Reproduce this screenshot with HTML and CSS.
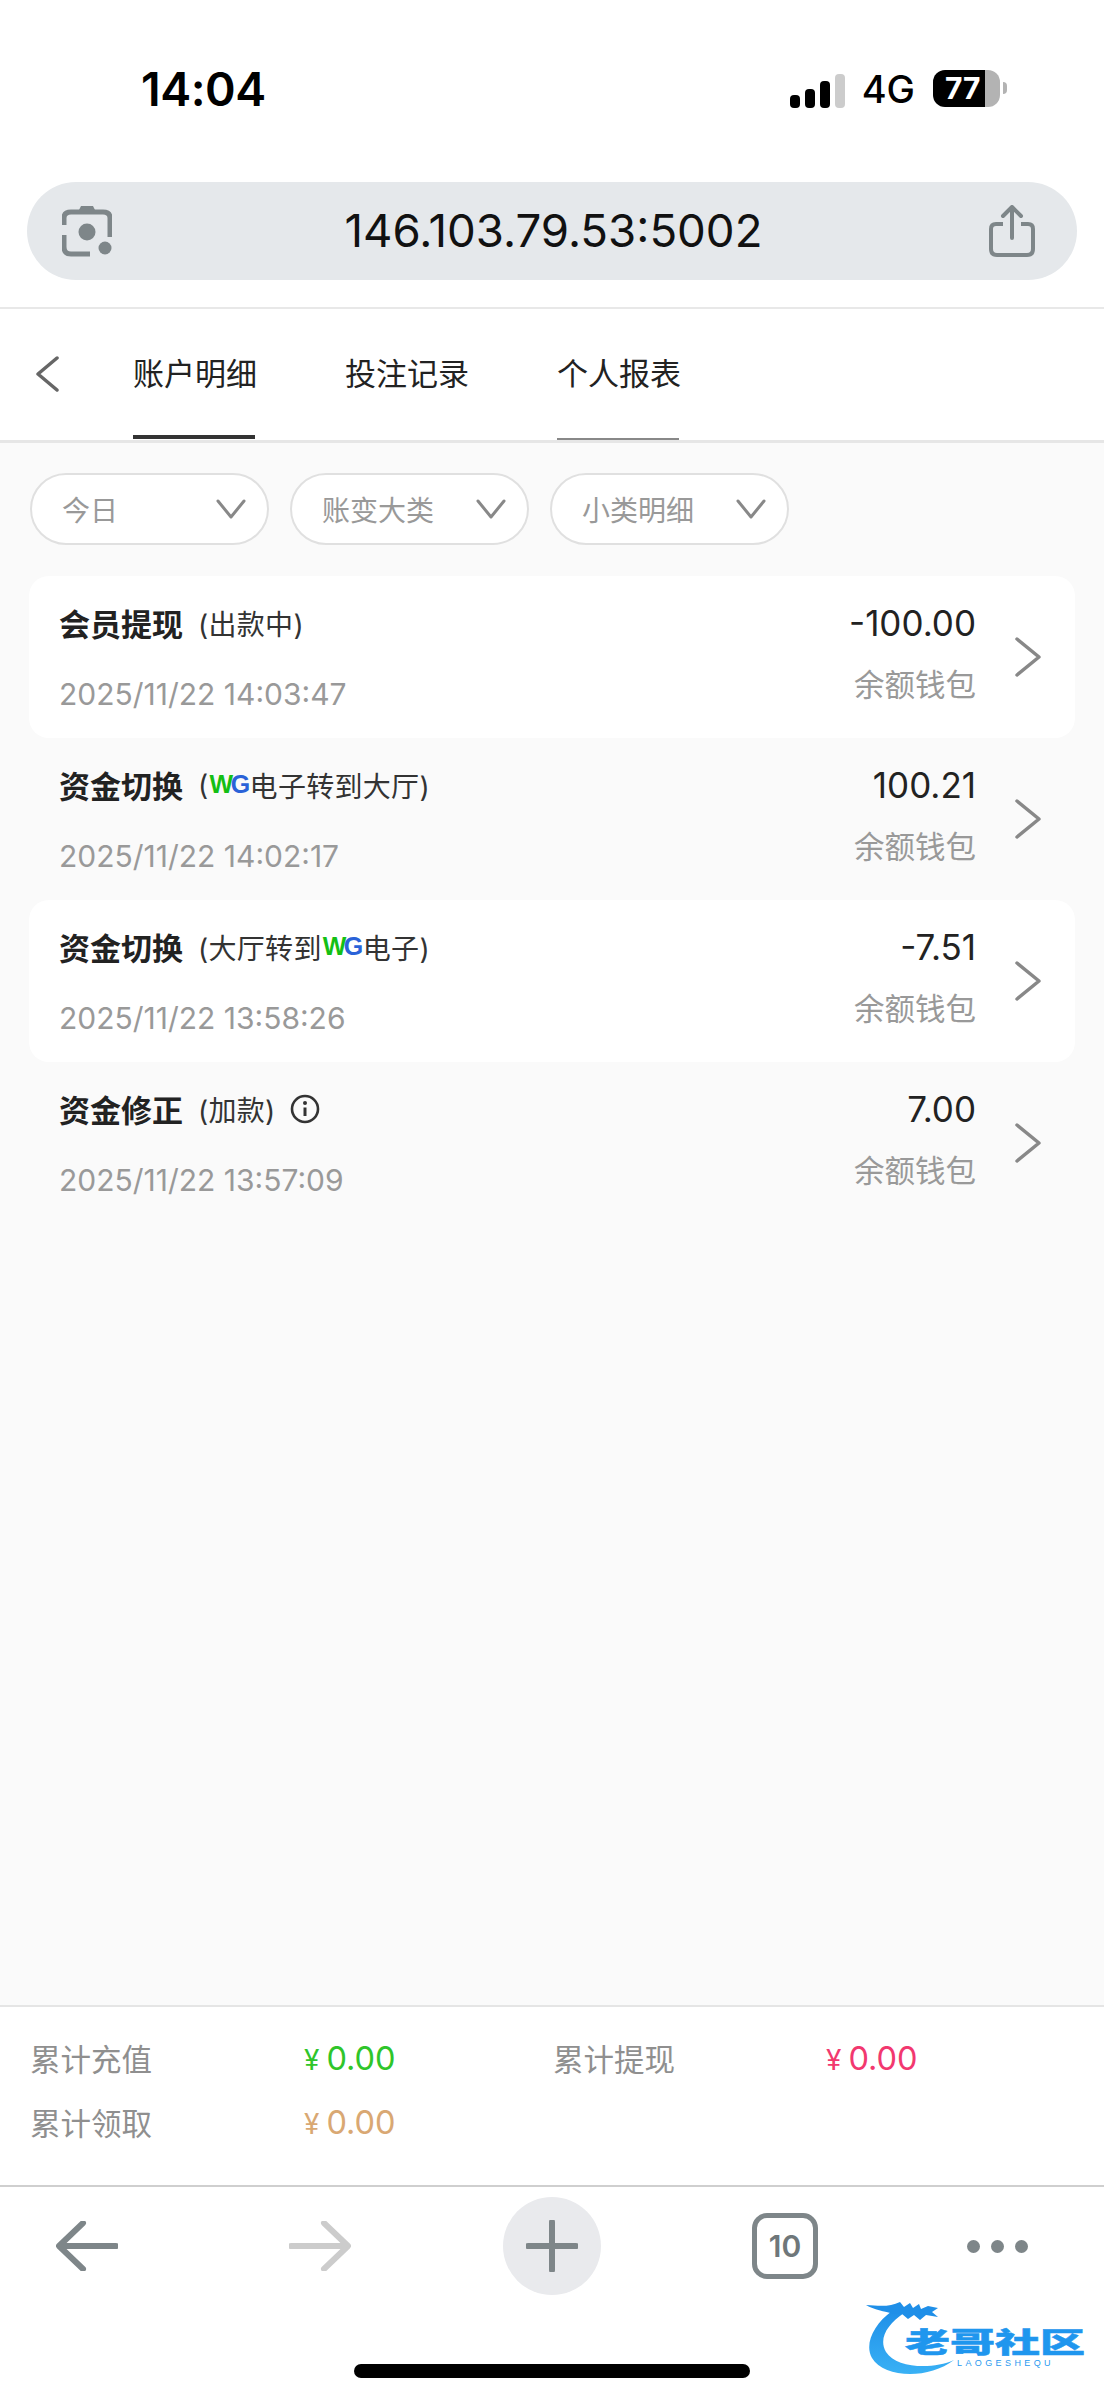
FILE: index.html
```html
<!DOCTYPE html>
<html lang="zh-CN">
<head>
<meta charset="utf-8">
<title>账户明细</title>
<link rel="stylesheet" href="styles.css">
</head>
<body>
<div class="phone">
  <header class="status">
    <span class="clock">14:04</span>
    <div class="indicators">
      <div class="signal"><i class="b1"></i><i class="b2"></i><i class="b3"></i><i class="b4"></i></div>
      <span class="network">4G</span>
      <div class="battery"><span>77</span></div>
      <i class="nub"></i>
    </div>
  </header>

  <div class="address-wrap">
    <div class="address">
      <svg class="lens" viewBox="0 0 50 52" width="50" height="52">
        <path d="M16 7 L19 1 H31 L34 7 Z" fill="#7e8689"/>
        <path d="M2 20 V13 Q2 7 9 7 H41 Q48 7 48 13 V32" fill="none" stroke="#7e8689" stroke-width="5"/>
        <path d="M2 30 V42 Q2 49 9 49 H28" fill="none" stroke="#7e8689" stroke-width="5"/>
        <circle cx="25" cy="27" r="8.5" fill="#7e8689"/>
        <circle cx="43" cy="43" r="6.5" fill="#7e8689"/>
      </svg>
      <span class="url">146.103.79.53:5002</span>
      <svg class="share" viewBox="0 0 46 52" width="46" height="52">
        <path d="M14 19 H7 Q2 19 2 24 V44 Q2 50 8 50 H38 Q44 50 44 44 V24 Q44 19 39 19 H32" fill="none" stroke="#7e8689" stroke-width="4"/>
        <path d="M23 33 V3 M14 11 L23 2 L32 11" fill="none" stroke="#7e8689" stroke-width="4" stroke-linecap="round" stroke-linejoin="round"/>
      </svg>
    </div>
  </div>

  <nav class="tabs">
    <svg class="back" viewBox="0 0 24 36" width="24" height="36"><path d="M22 2 L3 18 L22 34" fill="none" stroke="#666" stroke-width="3.5" stroke-linecap="round" stroke-linejoin="round"/></svg>
    <a class="tab active">账户明细</a>
    <a class="tab">投注记录</a>
    <a class="tab faint">个人报表</a>
  </nav>

  <main class="content">
    <div class="filters">
      <div class="filter"><span>今日</span><svg viewBox="0 0 30 20" width="30" height="20"><path d="M2 2 L15 18 L28 2" fill="none" stroke="#888" stroke-width="3" stroke-linecap="round" stroke-linejoin="round"/></svg></div>
      <div class="filter"><span>账变大类</span><svg viewBox="0 0 30 20" width="30" height="20"><path d="M2 2 L15 18 L28 2" fill="none" stroke="#888" stroke-width="3" stroke-linecap="round" stroke-linejoin="round"/></svg></div>
      <div class="filter"><span>小类明细</span><svg viewBox="0 0 30 20" width="30" height="20"><path d="M2 2 L15 18 L28 2" fill="none" stroke="#888" stroke-width="3" stroke-linecap="round" stroke-linejoin="round"/></svg></div>
    </div>

    <ul class="records">
      <li class="record card">
        <div class="left">
          <div class="title"><b>会员提现</b><span class="note">(出款中)</span></div>
          <div class="time">2025/11/22 14:03:47</div>
        </div>
        <div class="right"><div class="amount">-100.00</div><div class="wallet">余额钱包</div></div>
        <svg class="go" viewBox="0 0 26 40" width="26" height="40"><path d="M2 2 L24 20 L2 38" fill="none" stroke="#888" stroke-width="3.5" stroke-linecap="round" stroke-linejoin="round"/></svg>
      </li>
      <li class="record">
        <div class="left">
          <div class="title"><b>资金切换</b><span class="note">(<span class="wg"><em>W</em><u>G</u></span>电子转到大厅)</span></div>
          <div class="time">2025/11/22 14:02:17</div>
        </div>
        <div class="right"><div class="amount">100.21</div><div class="wallet">余额钱包</div></div>
        <svg class="go" viewBox="0 0 26 40" width="26" height="40"><path d="M2 2 L24 20 L2 38" fill="none" stroke="#888" stroke-width="3.5" stroke-linecap="round" stroke-linejoin="round"/></svg>
      </li>
      <li class="record card">
        <div class="left">
          <div class="title"><b>资金切换</b><span class="note">(大厅转到<span class="wg"><em>W</em><u>G</u></span>电子)</span></div>
          <div class="time">2025/11/22 13:58:26</div>
        </div>
        <div class="right"><div class="amount">-7.51</div><div class="wallet">余额钱包</div></div>
        <svg class="go" viewBox="0 0 26 40" width="26" height="40"><path d="M2 2 L24 20 L2 38" fill="none" stroke="#888" stroke-width="3.5" stroke-linecap="round" stroke-linejoin="round"/></svg>
      </li>
      <li class="record">
        <div class="left">
          <div class="title"><b>资金修正</b><span class="note">(加款)</span>
            <svg class="info" viewBox="0 0 30 30" width="30" height="30"><circle cx="15" cy="15" r="13" fill="none" stroke="#333" stroke-width="2.6"/><circle cx="15" cy="9" r="2" fill="#333"/><path d="M15 13.5 V22" stroke="#333" stroke-width="3"/></svg>
          </div>
          <div class="time">2025/11/22 13:57:09</div>
        </div>
        <div class="right"><div class="amount">7.00</div><div class="wallet">余额钱包</div></div>
        <svg class="go" viewBox="0 0 26 40" width="26" height="40"><path d="M2 2 L24 20 L2 38" fill="none" stroke="#888" stroke-width="3.5" stroke-linecap="round" stroke-linejoin="round"/></svg>
      </li>
    </ul>
  </main>

  <section class="totals">
    <span class="label">累计充值</span><span class="value green"><i>¥</i>0.00</span>
    <span class="label">累计提现</span><span class="value pink"><i>¥</i>0.00</span>
    <span class="label">累计领取</span><span class="value tan"><i>¥</i>0.00</span>
  </section>

  <footer class="toolbar">
    <svg viewBox="0 0 62 50" width="62" height="50"><path d="M60 25 H6 M27 2 L3 25 L27 48" fill="none" stroke="#7e8689" stroke-width="6" stroke-linecap="round" stroke-linejoin="round"/></svg>
    <svg viewBox="0 0 62 50" width="62" height="50"><path d="M2 25 H56 M35 2 L59 25 L35 48" fill="none" stroke="#cccccc" stroke-width="6" stroke-linecap="round" stroke-linejoin="round"/></svg>
    <div class="plus"><svg viewBox="0 0 52 52" width="52" height="52"><path d="M26 2 V50 M2 26 H50" fill="none" stroke="#7e8689" stroke-width="6" stroke-linecap="round"/></svg></div>
    <div class="tabcount">10</div>
    <div class="more"><i></i><i></i><i></i></div>
  </footer>
  <div class="home"></div>

  <div class="brand">
    <svg viewBox="0 0 222 80" width="222" height="80">
      <defs><linearGradient id="sweep" x1="0" y1="0" x2="0" y2="1"><stop offset="0" stop-color="#1f8fe8"/><stop offset="1" stop-color="#39b1f5"/></linearGradient></defs>
      <path d="M26 13 C8 26 -2 46 6 60 C18 80 62 82 88 62 C66 72 30 70 20 54 C12 40 22 26 38 15 Z" fill="url(#sweep)"/>
      <path d="M0 7 C14 8 24 9 34 4 L38 9 L44 5 L47 10 L53 6 L55 11 L62 8 L72 10 L66 14 L72 19 L60 17 L54 22 L48 17 L42 21 L36 16 L28 16 C18 13 8 12 0 7 Z" fill="#1f8fe8"/>
    </svg>
    <span class="brand-name">老哥社区</span>
    <span class="brand-sub">LAOGESHEQU</span>
  </div>
</div>
</body>
</html>
```
FILE: styles.css
```css
* { box-sizing: border-box; }
html, body { margin: 0; padding: 0; background: #fff; }
body { font-family: Inter, "Noto Sans CJK SC", sans-serif; color: #222; }
ul { list-style: none; margin: 0; padding: 0; }
i, em, u { font-style: normal; text-decoration: none; }

.phone { position: relative; width: 1104px; height: 2400px; display: flex; flex-direction: column; overflow: hidden; background: #fff; }

/* status bar */
.status { height: 182px; flex: none; display: flex; justify-content: space-between; padding: 70px 97px 0 141px; }
.clock { font-size: 46.5px; font-weight: 600; line-height: 38px; color: #000; letter-spacing: -0.5px; }
.indicators { display: flex; align-items: flex-start; height: 38px; }
.signal { display: flex; align-items: flex-end; gap: 5px; height: 36px; margin: 2px 17px 0 0; }
.signal i { width: 10px; border-radius: 4px; background: #000; }
.signal .b1 { height: 13px; }
.signal .b2 { height: 19px; }
.signal .b3 { height: 27px; }
.signal .b4 { height: 34px; background: #ccc; }
.network { font-size: 38px; font-weight: 500; line-height: 38px; margin-right: 18px; color: #000; }
.battery { width: 67px; height: 37px; border-radius: 12px; background: linear-gradient(90deg, #000 78%, #b3b3b3 78%); color: #fff; font-size: 30px; font-weight: 700; line-height: 37px; padding-left: 12px; }
.nub { width: 4px; height: 12px; margin: 12px 0 0 3px; background: #b3b3b3; border-radius: 0 6px 6px 0; }

/* address bar */
.address-wrap { height: 127px; flex: none; padding: 0 27px; border-bottom: 2px solid #e8e8e8; }
.address { height: 98px; border-radius: 49px; background: #e5e8eb; display: flex; align-items: center; justify-content: space-between; padding: 0 42px 0 35px; }
.url { font-size: 45.6px; line-height: 52px; color: #111; margin-left: 6px; }

/* page tabs */
.tabs { height: 134px; flex: none; display: flex; align-items: flex-start; gap: 90px; padding-left: 133px; position: relative; border-bottom: 3px solid #e6e6e6; }
.back { position: absolute; left: 35px; top: 47px; }
.tab { width: 122px; font-size: 31px; line-height: 130px; height: 131px; white-space: nowrap; color: #222; }
.tab.active { border-bottom: 4px solid #333; height: 130px; }
.tab.faint { border-bottom: 2px solid #888; }

/* list area */
.content { flex: 1; background: #fafafa; padding: 30px 29px 0; }
.filters { display: flex; gap: 21px; padding-left: 1px; }
.filter { width: 239px; height: 72px; background: #fff; border: 2px solid #e0e0e0; border-radius: 36px; display: flex; align-items: center; justify-content: space-between; padding: 0 21px 0 30px; color: #999; font-size: 28px; }
.filter span { line-height: 40px; padding-top: 4px; }
.records { margin-top: 31px; }
.record { height: 162px; border-radius: 20px; display: flex; align-items: flex-start; padding: 25.5px 34px 0 30px; position: relative; }
.record.card { background: #fff; }
.left { flex: 1; }
.title { height: 42px; display: flex; align-items: center; color: #222; }
.title b { font-size: 31px; font-weight: 700; }
.note { font-size: 28px; margin-left: 15px; color: #333; display: flex; align-items: center; letter-spacing: 0.3px; }
.info { margin-left: 14px; }
.time { margin-top: 30px; font-size: 30px; line-height: 40px; color: #999; }
.right { text-align: right; }
.amount { font-size: 35px; line-height: 42px; color: #222; }
.wallet { font-size: 30.5px; line-height: 40px; color: #999; margin-top: 21px; }
.go { margin: 35.5px 0 0 39px; }
.wg { font-family: "Liberation Sans", sans-serif; font-weight: 700; font-size: 25px; display: inline-flex; margin: 0 2px 0 1px; letter-spacing: -2.5px; }
.wg em { color: #14bf14; }
.wg u { color: #2a62d8; }

/* running totals */
.totals { height: 182px; flex: none; display: grid; grid-template-columns: 274px 249px 273px 1fr; grid-auto-rows: 64px; padding: 19px 0 0 30px; align-items: center; border-top: 2px solid #e5e5e5; border-bottom: 2px solid #cfcfcf; }
.label { font-size: 30.5px; color: #8f8f8f; }
.value { font-size: 32.5px; }
.value i { font-size: 28px; margin-right: 7px; }
.green { color: #2fc52a; }
.pink { color: #f2386f; }
.tan { color: #d9a873; }

/* browser toolbar */
.toolbar { height: 118px; flex: none; display: grid; grid-template-columns: 174px 292px 172px 294px 130px; align-items: center; justify-items: center; }
.plus { width: 98px; height: 98px; border-radius: 50%; background: #e9eaed; display: flex; align-items: center; justify-content: center; }
.tabcount { width: 66px; height: 66px; border: 5px solid #7e8689; border-radius: 15px; color: #6f777a; font-size: 30px; font-weight: 600; display: flex; align-items: center; justify-content: center; }
.more { display: flex; gap: 11px; }
.more i { width: 13px; height: 13px; border-radius: 50%; background: #7e8689; }
.home { width: 396px; height: 14px; border-radius: 7px; background: #000; margin: 59px auto 22px; flex: none; }

/* corner watermark */
.brand { position: absolute; left: 866px; top: 2298px; width: 222px; height: 80px; }
.brand svg { position: absolute; left: 0; top: 0; }
.brand-name { position: absolute; left: 39px; top: 23px; width: 180px; font-size: 45px; line-height: 44px; font-weight: 900; color: #1f96ee; white-space: nowrap; transform: scaleY(0.62); transform-origin: left center; -webkit-text-stroke: 0.8px #1f96ee; }
.brand-sub { position: absolute; left: 91px; top: 59px; font-family: "Liberation Sans", sans-serif; font-size: 9px; line-height: 12px; letter-spacing: 3.4px; color: #2a9af0; }
```
